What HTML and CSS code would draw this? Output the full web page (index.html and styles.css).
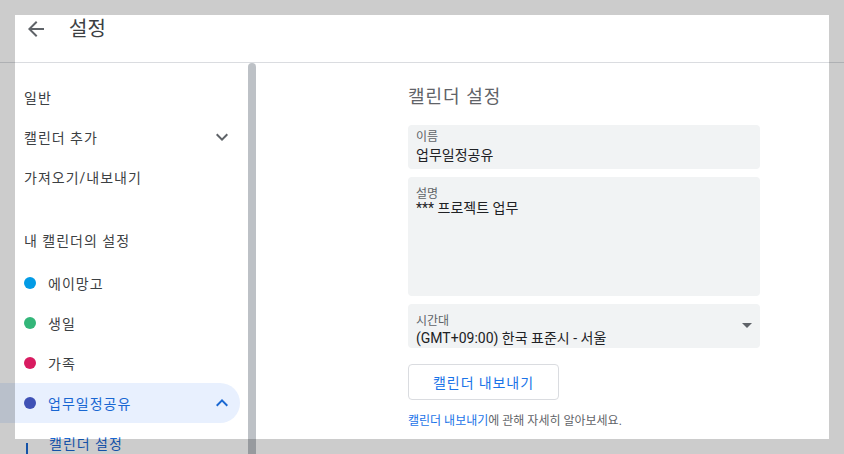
FILE: index.html
```html
<!DOCTYPE html>
<html lang="ko">
<head>
<meta charset="utf-8">
<title>설정</title>
<link rel="stylesheet" href="styles.css">
</head>
<body>
<div class="page">
  <header class="topbar">
    <span class="back">
      <svg viewBox="0 0 24 24" width="24" height="24"><path d="M20 11H7.83l5.59-5.59L12 4l-8 8 8 8 1.41-1.41L7.83 13H20v-2z" fill="#5f6368"/></svg>
    </span>
    <span class="title">설정</span>
  </header>
  <div class="body">
    <aside class="sidebar">
      <nav class="nav">
        <div class="item">일반</div>
        <div class="item">
          <span class="label">캘린더 추가</span>
          <svg class="chev" viewBox="0 0 24 24" width="24" height="24"><path d="M16.59 8.59L12 13.17 7.41 8.59 6 10l6 6 6-6z" fill="#5f6368"/></svg>
        </div>
        <div class="item">가져오기/내보내기</div>
        <div class="section">내 캘린더의 설정</div>
        <div class="item"><span class="dot dot-blue"></span><span class="label">에이망고</span></div>
        <div class="item"><span class="dot dot-green"></span><span class="label">생일</span></div>
        <div class="item"><span class="dot dot-red"></span><span class="label">가족</span></div>
        <div class="item active"><span class="dot dot-indigo"></span><span class="label">업무일정공유</span>
          <svg class="chev" viewBox="0 0 24 24" width="24" height="24"><path d="M12 8l-6 6 1.41 1.41L12 10.83l4.59 4.58L18 14z" fill="#1967d2"/></svg>
        </div>
        <div class="item sub"><span class="bar"></span><span class="label">캘린더 설정</span></div>
      </nav>
      <div class="track"><div class="thumb"></div></div>
    </aside>
    <main class="main">
      <h2 class="heading">캘린더 설정</h2>
      <div class="field field-name">
        <div class="flabel">이름</div>
        <div class="fvalue">업무일정공유</div>
      </div>
      <div class="field field-desc">
        <div class="flabel">설명</div>
        <div class="fvalue">*** 프로젝트 업무</div>
      </div>
      <div class="field field-tz">
        <div class="tztext">
          <div class="flabel">시간대</div>
          <div class="fvalue">(GMT+09:00) 한국 표준시 - 서울</div>
        </div>
        <svg class="caret" viewBox="0 0 10 5" width="10" height="5"><path d="M0 0l5 5 5-5z" fill="#5f6368"/></svg>
      </div>
      <button class="btn">캘린더 내보내기</button>
      <p class="help"><span class="link">캘린더 내보내기</span>에 관해 자세히 알아보세요.</p>
    </main>
  </div>
</div>
<div class="overlay"></div>
</body>
</html>
```
FILE: styles.css
```css
* { box-sizing: border-box; }
html, body {
  margin: 0;
  padding: 0;
  width: 844px;
  height: 454px;
  overflow: hidden;
  background: #fff;
}
body {
  font-family: Roboto, "Noto Sans CJK KR", sans-serif;
  color: #3c4043;
}
.page {
  width: 844px;
  height: 454px;
  display: flex;
  flex-direction: column;
}
.topbar {
  height: 63px;
  flex: none;
  border-bottom: 1px solid #dadce0;
  display: flex;
  align-items: center;
  padding: 0 0 4px 24px;
}
.back {
  width: 24px;
  height: 24px;
  display: flex;
}
.title {
  margin-left: 21px;
  font-size: 20px;
  color: #3c4043;
  line-height: 24px;
}
.body {
  flex: 1;
  display: flex;
  min-height: 0;
}
.sidebar {
  width: 256px;
  flex: none;
  display: flex;
}
.nav {
  width: 248px;
  padding-top: 14px;
  display: flex;
  flex-direction: column;
}
.item {
  width: 240px;
  height: 40px;
  flex: none;
  display: flex;
  align-items: center;
  padding: 0 6px 0 24px;
  font-size: 14px;
  letter-spacing: 1px;
  color: #3c4043;
}
.item .label { flex: 1; }
.chev { flex: none; }
.section {
  margin-top: 24px;
  height: 42px;
  flex: none;
  line-height: 40px;
  padding: 0 0 2px 24px;
  font-size: 14px;
  letter-spacing: 1px;
  color: #3c4043;
}
.dot {
  width: 12px;
  height: 12px;
  border-radius: 50%;
  margin-right: 12px;
  flex: none;
}
.dot-blue { background: #039be5; }
.dot-green { background: #33b679; }
.dot-red { background: #d81b60; }
.dot-indigo { background: #3f51b5; }
.item.active {
  background: #e8f0fe;
  border-radius: 0 20px 20px 0;
  color: #1967d2;
}
.item.sub { color: #1967d2; padding-left: 26px; }
.bar {
  width: 2px;
  height: 20px;
  background: #1967d2;
  margin-right: 21px;
  align-self: flex-end;
}
.track {
  width: 8px;
  display: flex;
}
.thumb {
  width: 8px;
  flex: 1;
  background: #bdc1c6;
  border-radius: 4px 4px 0 0;
}
.main {
  flex: 1;
  padding: 22px 0 0 152px;
  display: flex;
  flex-direction: column;
  align-items: flex-start;
}
.heading {
  margin: 0;
  font-size: 18px;
  font-weight: 400;
  letter-spacing: 1px;
  line-height: 24px;
  color: #5f6368;
}
.field {
  width: 352px;
  background: #f1f3f4;
  border-radius: 4px;
  padding-left: 8px;
}
.flabel {
  font-size: 12px;
  color: #5f6368;
  line-height: 16px;
}
.fvalue {
  font-size: 14px;
  color: #202124;
  line-height: 20px;
}
.field-name {
  margin-top: 16px;
  height: 44px;
  padding-top: 4px;
}
.field-desc {
  margin-top: 8px;
  height: 119px;
  padding-top: 11px;
}
.field-desc .flabel { line-height: 12px; }
.field-desc .fvalue { line-height: 15px; padding-top: 1px; }
.field-tz {
  margin-top: 8px;
  height: 44px;
  padding-top: 9px;
  padding-right: 8px;
  display: flex;
  align-items: flex-start;
}
.tztext { flex: 1; }
.field-tz .fvalue { line-height: 18px; }
.caret { margin-top: 10px; flex: none; }
.btn {
  margin-top: 16px;
  width: 151px;
  height: 36px;
  background: #fff;
  border: 1px solid #dadce0;
  border-radius: 4px;
  font-family: Roboto, "Noto Sans CJK KR", sans-serif;
  font-size: 14px;
  letter-spacing: 0.9px;
  color: #1a73e8;
  padding: 0;
}
.help {
  margin: 13px 0 0;
  font-size: 12px;
  line-height: 16px;
  color: #5f6368;
}
.link { color: #1a73e8; }
.overlay {
  position: fixed;
  left: 15px;
  top: 15px;
  width: 814px;
  height: 424px;
  box-shadow: 0 0 0 2000px rgba(0, 0, 0, 0.2);
  pointer-events: none;
}
```
